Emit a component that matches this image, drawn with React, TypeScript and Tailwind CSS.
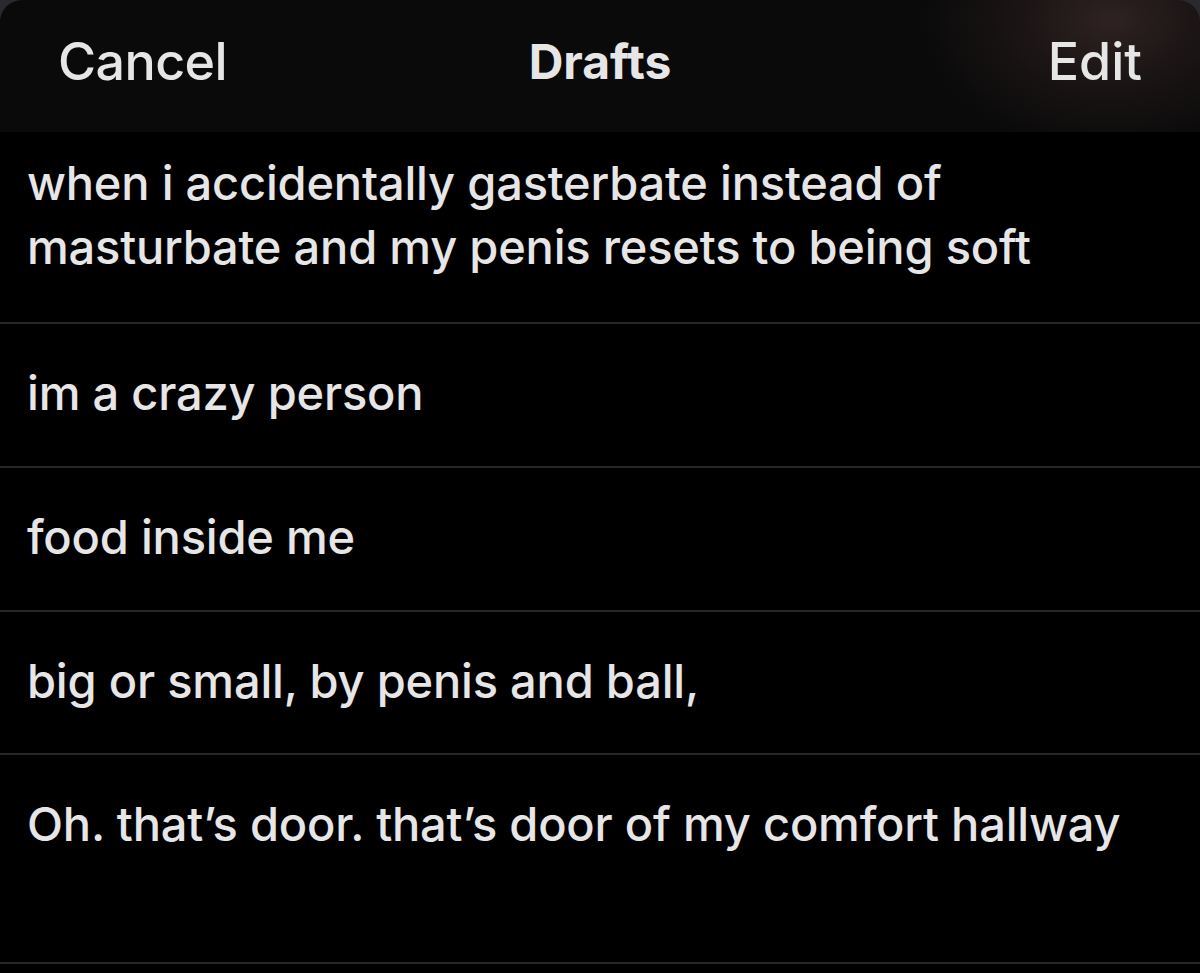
import React from "react";

const rows = [
  {
    text: "when i accidentally gasterbate instead of masturbate and my penis resets to being soft",
    cls: "pt-[19px] pb-[43px]",
  },
  { text: "im a crazy person", cls: "pt-[37px] pb-[41px]" },
  { text: "food inside me", cls: "pt-[37px] pb-[41px]" },
  { text: "big or small, by penis and ball,", cls: "pt-[37px] pb-[40px]" },
  { text: "Oh. that\u2019s door. that\u2019s door of my comfort hallway", cls: "pt-[37px] pb-[106px]" },
];

export default function App() {
  return (
    <div
      className="w-[1200px] h-[973px] bg-black overflow-hidden text-[#e6e6e6]"
      style={{ fontFamily: "Inter, 'Noto Sans', sans-serif" }}
    >
      <div className="bg-[#2a2a2e]">
        <div className="h-[132px] rounded-t-[22px] bg-[#0a0a0a] bg-[radial-gradient(ellipse_190px_130px_at_1110px_20px,#2f2222_0%,#1c1515_45%,#0a0a0a_100%)] grid grid-cols-3 items-center px-[58px] pb-[8px]">
          <div className="text-[52px] font-medium tracking-[-0.6px] leading-none">Cancel</div>
          <div className="text-[48px] font-bold text-center leading-none">Drafts</div>
          <div className="text-[52px] font-medium text-right leading-none">Edit</div>
        </div>
      </div>
      <div className="flex flex-col">
        {rows.map((r, i) => (
          <div key={i} className={`pl-[27px] pr-[20px] border-b-2 border-[#262626] ${r.cls}`}>
            <p className="text-[47px] font-medium leading-[64px] tracking-[-0.2px]">{r.text}</p>
          </div>
        ))}
      </div>
    </div>
  );
}
